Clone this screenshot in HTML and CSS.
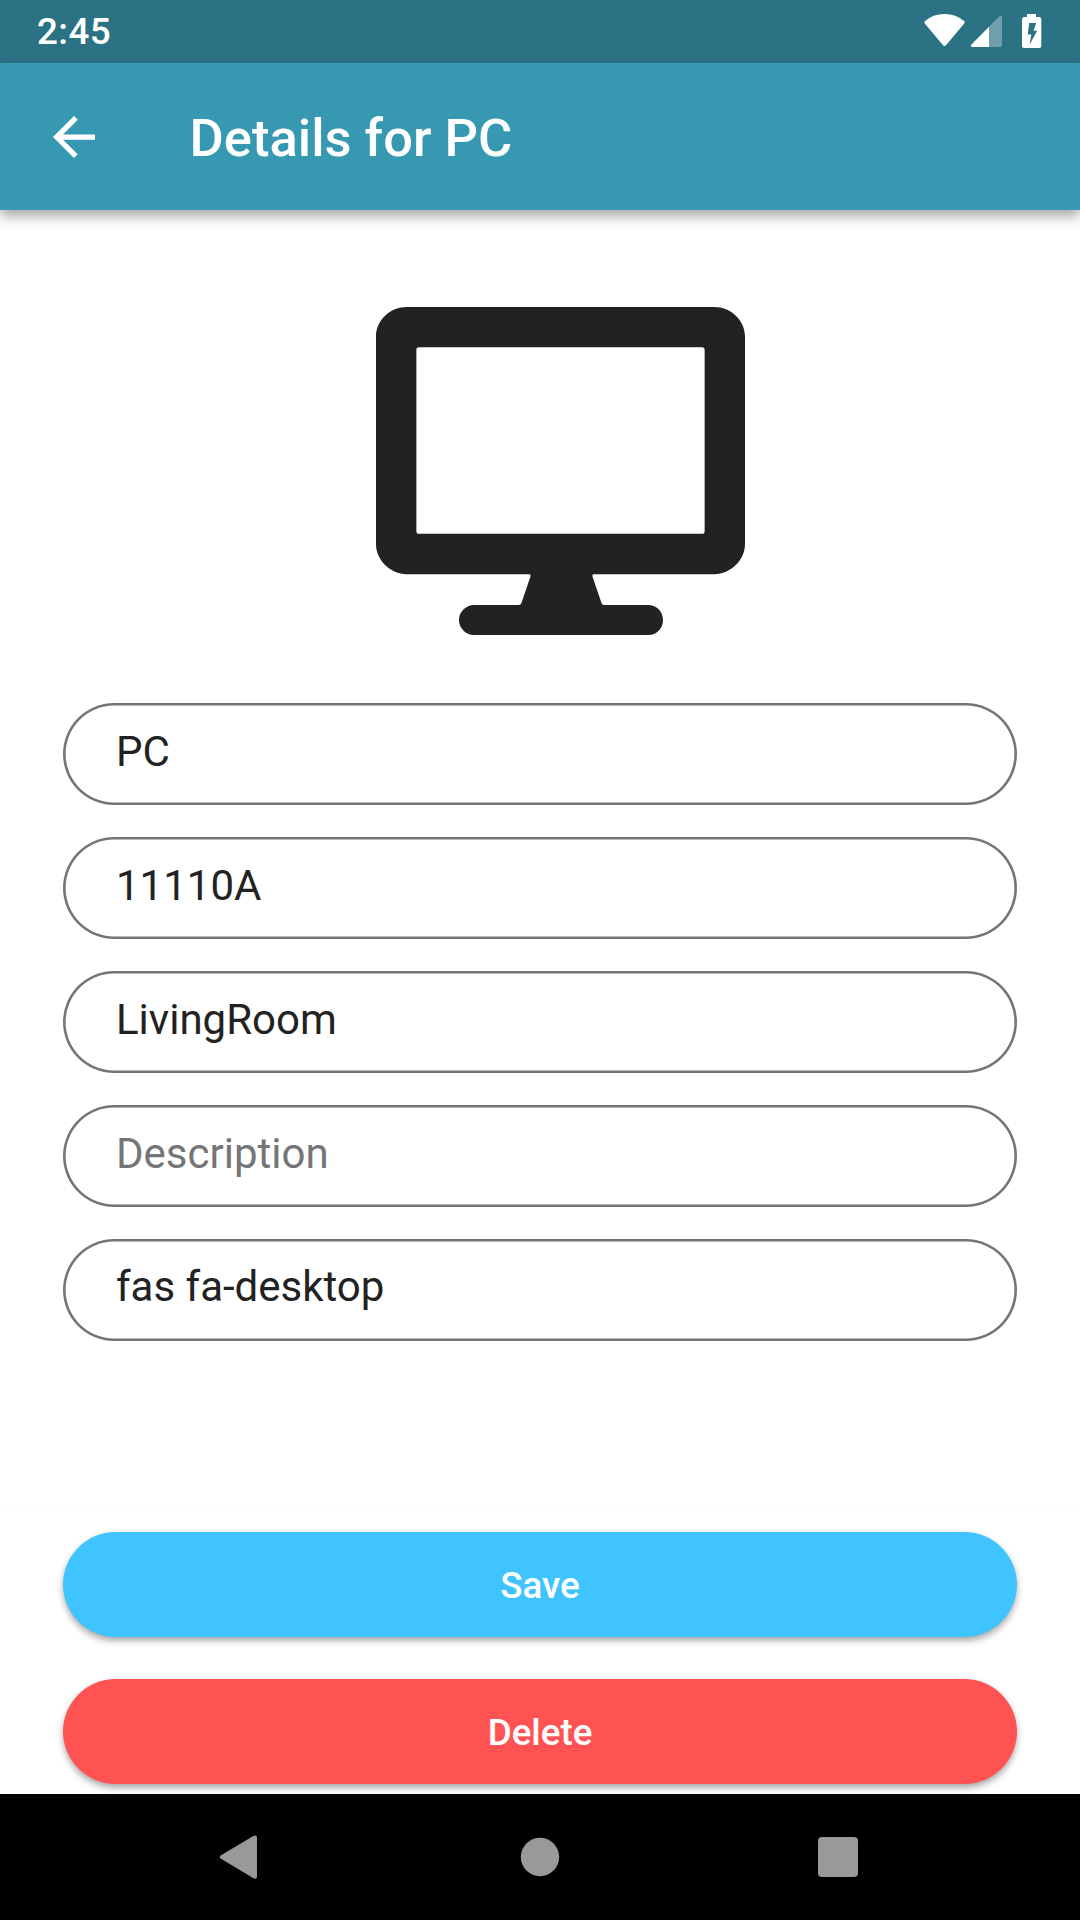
FILE: index.html
```html
<!DOCTYPE html>
<html lang="en">
<head>
<meta charset="utf-8">
<title>Details for PC</title>
<link rel="stylesheet" href="styles.css">
</head>
<body>
<div class="screen">
  <div class="status-bar">
    <span class="clock">2:45</span>
    <svg class="status-icons" width="118" height="36" viewBox="0 0 118 36">
      <path fill="#fff" d="M.8 8.200Q9 1 20.500 1T40.200 8.200Q41 9.300 40.200 10.400L22 32.300Q20.500 33.800 19 32.300L.8 10.400Q0 9.300 .8 8.200z"/>
      <path fill="#6f9fac" d="M65 13.500 75.500 3.300Q78 2 78 4.500V32q0 2-2 2H65z"/>
      <path fill="#fff" d="M65 13.800V34H48.500Q46 33.500 47.500 31.500z"/>
      <path fill="#fff" fill-rule="evenodd" d="M103 1h9v3h3q2.300 0 2.300 2.300V33q0 2-2 2H100q-2 0-2-2V6.300Q98 4 100.300 4h2.700zM105.200 10L103.800 21.500H107.300L105.500 31.800L113.200 17.800H109.600L112.200 10z"/>
    </svg>
  </div>
  <header class="app-bar">
    <svg class="back" width="42" height="42" viewBox="4 4 16 16"><path fill="#fff" d="M20 11H7.830l5.590-5.590L12 4l-8 8 8 8 1.410-1.410L7.830 13H20v-2z"/></svg>
    <h1 class="title">Details for PC</h1>
  </header>
  <main class="content">
    <svg class="device" width="369" height="328" viewBox="0 0 576 512" preserveAspectRatio="none">
      <path fill="#222" fill-rule="evenodd" d="M48 0H528C554 0 576 21 576 46V370C576 395 554 417 528 417H340Q337 417 338 421L352 462Q353 465 356 465H425C438 465 448 475 448 488.500S438 512 425 512H153C140 512 129.500 501 129.500 488.500S140 465 153 465H223Q226 465 227 462L241 421Q242 417 239 417H48C22 417 0 395 0 370V46C0 21 22 0 48 0zM67 63Q63 63 63 67V350Q63 354 67 354H509Q513 354 513 350V67Q513 63 509 63z"/>
    </svg>
    <form class="form">
      <div class="field">PC</div>
      <div class="field">11110A</div>
      <div class="field">LivingRoom</div>
      <div class="field placeholder">Description</div>
      <div class="field icon-name">fas fa-desktop</div>
    </form>
    <div class="actions">
      <button class="btn save">Save</button>
      <button class="btn delete">Delete</button>
    </div>
  </main>
  <nav class="nav-bar">
    <svg width="1080" height="126" viewBox="0 0 1080 126" fill="#999">
      <path d="M252.500 42.500Q257 40 257 44V82.500Q257 86 253 84L221 64.800Q218.500 63 221 61.200z"/>
      <circle cx="540" cy="63" r="19.200"/>
      <rect x="818" y="43" width="40" height="40" rx="4"/>
    </svg>
  </nav>
</div>
</body>
</html>
```
FILE: styles.css
```css
* { box-sizing: border-box; }
body { margin: 0; font-family: Roboto, sans-serif; background: #fff; }
.screen { width: 1080px; height: 1920px; display: flex; flex-direction: column; overflow: hidden; }
.status-bar { flex: none; height: 63px; padding: 0 38.500px 0 37px; display: flex; justify-content: space-between; align-items: flex-start; background: #2b7384; color: #fff; }
.clock { font-size: 36.750px; font-weight: 500; line-height: 64px; letter-spacing: .4px; }
.status-icons { margin-top: 13px; }
.app-bar { flex: none; height: 147px; padding-left: 52.600px; display: flex; align-items: center; gap: 95px; background: #3699b1; color: #fff; box-shadow: 0 5px 10px rgba(0,0,0,.2), 0 10px 13px rgba(0,0,0,.12), 0 2px 14px rgba(0,0,0,.06); }
.title { margin: 0; font-size: 52.500px; font-weight: 500; line-height: 62px; padding-top: 2px; }
.content { flex: 1; min-height: 0; padding: 97px 63px 0; display: flex; flex-direction: column; }
.device { display: block; margin-left: 313px; flex: none; }
.form { margin-top: 68px; display: flex; flex-direction: column; gap: 31.600px; }
.field { height: 102.400px; border-radius: 51.200px; padding: 24px 53px 0; box-shadow: inset 0 0 0 2.600px #757575; color: #222; font-size: 42px; line-height: 50px; }
.placeholder { color: #757575; }
.icon-name { padding-top: 23px; }
.actions { margin: 168.600px -63px 0; padding: 21px 63px 0; border-top: 1px solid #fafafa; display: flex; flex-direction: column; gap: 42px; }
.btn { height: 105px; border: 0; border-radius: 52.500px; padding: 3px 0 0; color: #fff; font: 500 36.750px/44px Roboto, sans-serif; box-shadow: 0 4px 6px -1px rgba(0,0,0,.22), 0 4px 8px rgba(0,0,0,.14), 0 2px 8px rgba(0,0,0,.05); }
.save { background: #40c4ff; }
.delete { background: #ff5252; }
.nav-bar { flex: none; height: 126px; background: #000; position: relative; }
.nav-bar svg { display: block; }
```
